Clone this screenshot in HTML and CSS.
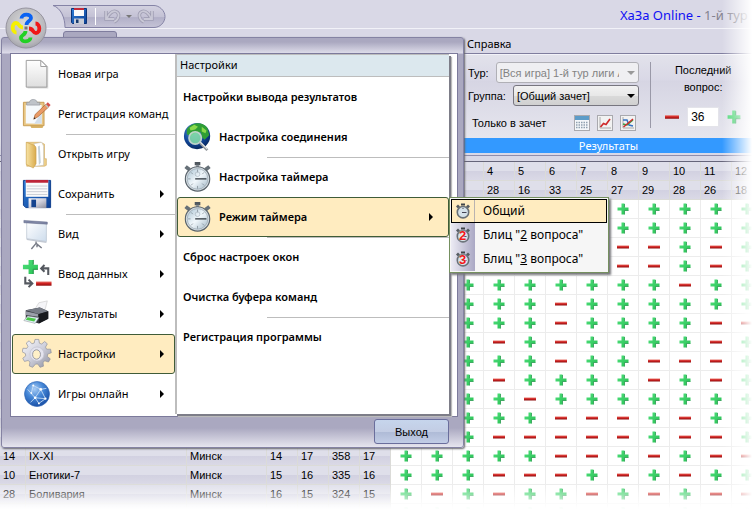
FILE: index.html
```html
<!DOCTYPE html>
<html lang="ru">
<head>
<meta charset="utf-8">
<title>ХаЗа Online</title>
<link rel="stylesheet" href="styles.css">
</head>
<body>
<svg class="defs" aria-hidden="true">
  <defs>
    <linearGradient id="gPlus" x1="0" y1="0" x2="1" y2="1"><stop offset="0" stop-color="#4fe07c"/><stop offset="1" stop-color="#27bf52"/></linearGradient>
    <linearGradient id="gMinus" x1="0" y1="0" x2="0" y2="1"><stop offset="0" stop-color="#e8786e"/><stop offset=".45" stop-color="#d02020"/><stop offset="1" stop-color="#8e1010"/></linearGradient>
    <linearGradient id="gPage" x1="0" y1="0" x2="0" y2="1"><stop offset="0" stop-color="#ffffff"/><stop offset="1" stop-color="#dedede"/></linearGradient>
    <linearGradient id="gFolder" x1="0" y1="0" x2="1" y2="0"><stop offset="0" stop-color="#f8e3a4"/><stop offset="1" stop-color="#d9ab4d"/></linearGradient>
    <linearGradient id="gDisk" x1="0" y1="0" x2="1" y2="1"><stop offset="0" stop-color="#2f7fd8"/><stop offset="1" stop-color="#0c3f94"/></linearGradient>
    <linearGradient id="gMetal" x1="0" y1="0" x2="1" y2="1"><stop offset="0" stop-color="#f8f8fc"/><stop offset=".5" stop-color="#cfd0dc"/><stop offset="1" stop-color="#8b8d9c"/></linearGradient>
    <linearGradient id="gScreen" x1="0" y1="0" x2="1" y2="1"><stop offset="0" stop-color="#ffffff"/><stop offset="1" stop-color="#cddcec"/></linearGradient>
    <radialGradient id="gBlue" cx=".4" cy=".3" r=".7"><stop offset="0" stop-color="#a8ccf4"/><stop offset=".5" stop-color="#4486d6"/><stop offset="1" stop-color="#1b52a8"/></radialGradient>
    <radialGradient id="gEarth" cx=".4" cy=".3" r=".75"><stop offset="0" stop-color="#5f9ce0"/><stop offset=".6" stop-color="#12489c"/><stop offset="1" stop-color="#062356"/></radialGradient>
    <linearGradient id="gDial" x1="0" y1="0" x2="1" y2="1"><stop offset="0" stop-color="#a9c2d2"/><stop offset=".5" stop-color="#f2f8fc"/><stop offset="1" stop-color="#a3b8c6"/></linearGradient>
    <radialGradient id="gOrb" cx=".5" cy=".4" r=".6"><stop offset="0" stop-color="#dcdcdc"/><stop offset=".8" stop-color="#b8b8bc"/><stop offset="1" stop-color="#a4a4ac"/></radialGradient>
    <linearGradient id="gQuick" x1="0" y1="0" x2="0" y2="1"><stop offset="0" stop-color="#d3d1e0"/><stop offset=".5" stop-color="#c4c2d5"/><stop offset=".55" stop-color="#b2b0c8"/><stop offset="1" stop-color="#c5c3d6"/></linearGradient>

    <symbol id="i-plus" viewBox="0 0 12 12"><path d="M4.500.5h3v4h4v3h-4v4h-3v-4h-4v-3h4z" fill="url(#gPlus)"/><path d="M7.500 1v3.500M11.500 7.500h-4v4" fill="none" stroke="#1a8f42" stroke-width=".7"/></symbol>
    <symbol id="i-minus" viewBox="0 0 12 12"><rect y="4.500" width="12" height="3" fill="url(#gMinus)"/></symbol>

    <symbol id="i-new" viewBox="0 0 32 32"><path d="M5 1.500h16l6 6v23H5z" fill="#999" opacity=".35" transform="translate(1 1)"/><path d="M4.500 1.500H20l6.500 6.500v22h-22z" fill="url(#gPage)" stroke="#9a9a9a"/><path d="M20 1.500V8h6.500z" fill="#fff" stroke="#9a9a9a"/></symbol>
    <symbol id="i-register" viewBox="0 0 32 32"><path d="M8 27h15l-1 4H10z" fill="#d9b468"/><path d="M1.500 3.500h22v25h-22z" fill="#e8c684" stroke="#c69b50"/><path d="M4 6.500h17v20l-17-.500z" fill="#f6f9fc"/><path d="M21 14v12l-8 .500z" fill="#d3deea"/><path d="M5 3.500h3c0-4 8-4 8 0h3v3H5z" fill="#bfc3c9" stroke="#8f949c" stroke-width=".7"/><path d="M12.500 21.500l1.500-5L25.500 5.500l3 3L17 19z" fill="#e99a66" stroke="#a7602f" stroke-width=".7"/><path d="M25.500 5.500l2-2 3 3-2 2z" fill="#d3504c"/><path d="M24.500 6.500l1-1 3 3-1 1z" fill="#bcc"/><path d="M12.500 21.500l.6-2 1.400 1.400z" fill="#222"/></symbol>
    <symbol id="i-open" viewBox="0 0 32 32"><path d="M5 3.500h15l4 2V21h2v7l-2 1H5z" fill="#edce87" stroke="#cfa658" stroke-width=".6"/><path d="M13 5l8-1.500 2 4V28l-9 1z" fill="#fff" stroke="#b7b7b7" stroke-width=".5"/><path d="M17 8l2-1 1 18-2 3z" fill="#c5d2da"/><path d="M4.500 3.500l8 3c2 1 2.500 2 2.500 4v16l-3 4.500-7.500-4z" fill="url(#gFolder)" stroke="#c89f4d" stroke-width=".6"/></symbol>
    <symbol id="i-save" viewBox="0 0 32 32"><path d="M1.500 1.500h29v29H4l-2.500-2.500z" fill="url(#gDisk)" stroke="#0b3c8c"/><path d="M4 1h24v18H4z" fill="#fafafa"/><path d="M4 1h24v3H4z" fill="#bd2438"/><path d="M5 7.500h22M5 10.500h22M5 13.500h22M5 16.500h22" stroke="#b9bfc9" stroke-width=".8"/><path d="M7 20.500h19V31H7z" fill="url(#gMetal)"/><path d="M10 22h5v8h-5z" fill="#15448f"/></symbol>
    <symbol id="i-save-s" viewBox="0 0 16 16"><path d="M.5.5h15v15h-14l-1-1z" fill="url(#gDisk)" stroke="#0b3478"/><path d="M3 0h10v8H3z" fill="#fafafa"/><path d="M3 0h10v2H3z" fill="#c22a3c"/><path d="M3 10.500h10V16H3z" fill="#c8ccd6"/><path d="M5 11.500h2.500V15H5z" fill="#15386e"/></symbol>
    <symbol id="i-view" viewBox="0 0 32 32"><path d="M5 3l21 2v19L5 21z" fill="url(#gScreen)" stroke="#b2bfcc" stroke-width=".7"/><path d="M2 1.500l25 1.800v2.200L2 4z" fill="#8087a6" stroke="#586080" stroke-width=".5"/><path d="M5 21l21 3v1.500L5 22.500z" fill="#c2c8d2"/><path d="M15 24v3M15 26l-5 6M15 26l6 5M16 26l0 4" stroke="#777b86" stroke-width="1.500" fill="none"/></symbol>
    <symbol id="i-data" viewBox="0 0 32 32"><path d="M7 1h5v5h5v5h-5v5H7v-5H1V6h6z" fill="url(#gPlus)"/><path d="M12 1v5M17 11h-5v5" stroke="#168a3c" fill="none"/><path d="M21 10h7v7M24 6.500L20.500 10l3.500 3.500M3.500 19v7h6M7 22l4 4-4 4" fill="none" stroke="#555960" stroke-width="2.200"/><rect x="15" y="24" width="16.500" height="4.500" fill="url(#gMinus)"/></symbol>
    <symbol id="i-print" viewBox="0 0 32 32"><path d="M13 12L18 4l9-2-3 12z" fill="#f5f5f8" stroke="#bbb" stroke-width=".5"/><path d="M4 12l15-3 9 4v8l-10 5-14-4z" fill="#34373e"/><path d="M4 12l15-3 9 4-10 3z" fill="#777c86"/><path d="M18 16l10-3v8l-10 5z" fill="#16181c"/><path d="M4 13l13 3v3L4 17z" fill="#9b9faa"/><path d="M6 18l12 2-4 6-12-3z" fill="#dff0f8" stroke="#8a8a8a" stroke-width=".5"/><path d="M6 19.500l9 1.500-2 3-9-2z" fill="#4cc648"/></symbol>
    <symbol id="i-gear" viewBox="0 0 32 32"><path d="M13.400 1h4.200l.7 4.200 2.500.9 3.300-2.800 3 2.600-2 3.700 1.300 2.300 4.300-.1.800 4-4 1.500-.4 2.600 3.300 2.700-2 3.500-4.100-1.300-2 1.700.5 4.200-3.800 1.300-2.400-3.600h-2.600L10.800 32l-3.700-1.600.7-4.200-2-1.800-4.100 1-1.900-3.500 3.300-2.600-.4-2.600-3.500-1.900.8-4 4.200.2 1.400-2.200-1.900-3.800 3.200-2.500L10 5.900l2.500-.9z" transform="translate(1 -.5) scale(.96)" fill="url(#gMetal)" stroke="#888a99" stroke-width=".7"/><circle cx="16" cy="16" r="7.500" fill="#e3e3ee" stroke="#c0c0ce" stroke-width=".7"/><ellipse cx="15.500" cy="16.500" rx="4.200" ry="5" fill="#fff0c8" stroke="#8b8d9b" stroke-width=".9"/></symbol>
    <symbol id="i-net" viewBox="0 0 32 32"><circle cx="16" cy="16" r="13.300" fill="url(#gBlue)" stroke="#2c64b4" stroke-width=".7"/><path d="M6 11l8 9 11 1M12 7l8 4 6-1M14 20l6-9M14 20l-5 5M20 11l5 10-7 5-4-6M12 7l-2 8" fill="none" stroke="#c9def6" stroke-width=".9"/><g fill="#fff"><circle cx="14" cy="20" r="1.400"/><circle cx="20" cy="11" r="1.400"/><circle cx="25" cy="21" r="1.200"/><circle cx="12" cy="7" r="1.100"/><circle cx="10" cy="15" r="1"/><circle cx="18" cy="26" r="1"/></g></symbol>
    <symbol id="i-earth" viewBox="0 0 32 32"><circle cx="15" cy="15" r="14" fill="url(#gEarth)"/><path d="M4 8C9 0 20-1 26 6l2 8-5 5-3-3-1-5-6 1-5 3-4-2z" fill="#2f9e35"/><path d="M7 6l5-3 4 2-3 3-5 1zM20 5l5 4-1 3-4-2z" fill="#8bd94c"/><circle cx="13" cy="17" r="6.600" fill="#85dfa6" fill-opacity=".85" stroke="#bfd2cb" stroke-width="1.800"/><path d="M18 22l8 8" stroke="#8f9498" stroke-width="3"/><path d="M18.500 21.500l7.500 7.500" stroke="#e6eaec" stroke-width="1.200"/></symbol>
    <symbol id="i-watch" viewBox="0 0 32 32"><path d="M12.500 0h6v3.500h-6z" fill="#4f575e"/><path d="M14 3h3v4h-3z" fill="#888f96"/><path d="M1.500 6.500l2.500-3 4 3-2.500 3zM29.500 6.500l-2.500-3-4 3 2.500 3z" fill="#667078"/><circle cx="15.500" cy="18" r="13" fill="#d3dbe1" stroke="#59636b" stroke-width="1.200"/><circle cx="15.500" cy="18" r="11" fill="url(#gDial)" stroke="#96a4ae" stroke-width=".7"/><path d="M15.500 8v3M15.500 25.500v3M5.500 18h2.500M8.500 11l2 2M22.500 11l-2 2M8.500 25l2-2M22.500 25l-2-2" stroke="#7d8993" stroke-width=".8"/><circle cx="15.500" cy="13" r="2.500" fill="none" stroke="#a7b3bd" stroke-width=".7"/><path d="M13 18h12" stroke="#333b43" stroke-width="1.400"/></symbol>
    <symbol id="i-watch-s" viewBox="0 0 16 16"><path d="M6 .5h4v2H6z" fill="#3f4449"/><path d="M1 3.500L3 1.500l2 2-2 2zM15 3.500l-2-2-2 2 2 2z" fill="#555b60"/><circle cx="8" cy="9.200" r="5.700" fill="#d5e2ea" stroke="#687077" stroke-width="1.600"/><path d="M7 9.500h4.500M8 5v1" stroke="#445" stroke-width="1"/></symbol>
    <symbol id="i-undo" viewBox="0 0 18 16"><path d="M2 3v8h8M3 10.500C5 5 9 2.500 12 3.500c4 1.500 3.500 7.500-2 10.500" fill="none" stroke="#9f9db2" stroke-width="3.400"/><path d="M2 3v8h8M3 10.500C5 5 9 2.500 12 3.500c4 1.500 3.500 7.500-2 10.500" fill="none" stroke="#c9c8d6" stroke-width="1.800"/></symbol>
  </defs>
</svg>

<div class="app">
  <header class="titlebar">
    <div class="quick">
      <svg class="quick-shape" viewBox="0 0 115 24" aria-hidden="true"><path d="M1 .5h101c5 0 11 5 11 11s-5 11-11 11H13C13 13 9 3 1 .5z" fill="url(#gQuick)" stroke="#8583a6"/></svg>
      <button type="button" class="tool" aria-label="Сохранить"><svg width="16" height="16"><use href="#i-save-s"/></svg></button>
      <span class="quick-sep"></span>
      <button type="button" class="tool" aria-label="Отменить"><svg width="18" height="16"><use href="#i-undo"/></svg></button>
      <span class="caret"></span>
      <button type="button" class="tool flip" aria-label="Повторить"><svg width="18" height="16"><use href="#i-undo"/></svg></button>
    </div>
    <h1 class="title">ХаЗа Online - <span>1-й тур л</span></h1>
  </header>

  <nav class="tabs">
    <span class="tab-stub"></span>
    <a href="#" class="tab">Справка</a>
  </nav>

  <section class="ribbon">
    <div class="groups">
      <div class="fields">
        <div class="field"><label for="tour">Тур:</label><span class="pick off"><select id="tour" disabled><option>[Вся игра] 1-й тур лиги А</option></select></span></div>
        <div class="field"><label for="group">Группа:</label><span class="pick"><select id="group"><option>[Общий зачет]</option></select></span></div>
        <div class="field tools"><span>Только в зачет</span>
          <button type="button" aria-label="Калькулятор"><svg width="14" height="14" viewBox="0 0 14 14"><path d="M0 0h14v14H0z" fill="#f4f7fa"/><path d="M0 0h14v4H0z" fill="#5d9cc8"/><path d="M1 6.500h12M1 9h12M1 11.500h12" stroke="#8fa0b0" stroke-width="1.500" stroke-dasharray="1.500 1"/></svg></button>
          <button type="button" aria-label="График"><svg width="14" height="14" viewBox="0 0 14 14"><path d="M2 1v11h11" stroke="#aaa" fill="none"/><path d="M2.500 11l3-3.500 2.500 1L12 3" stroke="#cf2a2a" stroke-width="1.700" fill="none"/></svg></button>
          <button type="button" aria-label="Сравнение"><svg width="14" height="14" viewBox="0 0 14 14"><path d="M2 1v11h11" stroke="#aaa" fill="none"/><path d="M2 4h4l2 5 4 1" stroke="#3673c4" stroke-width="1.500" fill="none"/><path d="M2 8l4 1 6-5" stroke="#36a04a" stroke-width="1.500" fill="none"/><path d="M2.500 11L12 3" stroke="#cf2a2a" stroke-width="1.500"/></svg></button>
        </div>
      </div>
      <div class="last">
        <label for="last">Последний вопрос:</label>
        <div class="stepper">
          <button type="button" aria-label="Меньше"><svg width="14" height="14"><use href="#i-minus"/></svg></button>
          <input id="last" type="text" value="36">
          <button type="button" aria-label="Больше"><svg width="14" height="14"><use href="#i-plus"/></svg></button>
        </div>
      </div>
    </div>
    <div class="caption">Результаты</div>
  </section>

  <div class="sheet">
    <table>
      <colgroup><col class="c-num"><col class="c-team"><col class="c-city"><col span="16" class="c-cell"></colgroup>
      <thead id="head"></thead>
      <tbody id="rows"></tbody>
    </table>
  </div>

  <div class="menu">
    <div class="menu-body">
      <ul class="primary">
        <li><button type="button"><svg><use href="#i-new"/></svg>Новая игра</button></li>
        <li class="ruled"><button type="button"><svg><use href="#i-register"/></svg>Регистрация команд</button></li>
        <li><button type="button"><svg><use href="#i-open"/></svg>Открыть игру</button></li>
        <li class="ruled"><button type="button" class="more"><svg><use href="#i-save"/></svg>Сохранить</button></li>
        <li><button type="button" class="more"><svg><use href="#i-view"/></svg>Вид</button></li>
        <li><button type="button" class="more"><svg><use href="#i-data"/></svg>Ввод данных</button></li>
        <li><button type="button" class="more"><svg><use href="#i-print"/></svg>Результаты</button></li>
        <li><button type="button" class="more active"><svg><use href="#i-gear"/></svg>Настройки</button></li>
        <li><button type="button" class="more"><svg><use href="#i-net"/></svg>Игры онлайн</button></li>
      </ul>
      <div class="secondary">
        <h2>Настройки</h2>
        <ul>
          <li><button type="button">Настройки вывода результатов</button></li>
          <li class="ruled"><button type="button"><svg><use href="#i-earth"/></svg>Настройка соединения</button></li>
          <li><button type="button"><svg><use href="#i-watch"/></svg>Настройка таймера</button></li>
          <li class="ruled"><button type="button" class="more active"><svg><use href="#i-watch"/></svg>Режим таймера</button></li>
          <li><button type="button">Сброс настроек окон</button></li>
          <li class="ruled"><button type="button">Очистка буфера команд</button></li>
          <li><button type="button">Регистрация программы</button></li>
        </ul>
      </div>
    </div>
    <div class="menu-foot"><button type="button" class="exit">Выход</button></div>
  </div>

  <button type="button" class="orb" aria-label="Меню">
    <svg viewBox="0 0 42 42" aria-hidden="true">
      <circle cx="21" cy="21" r="20" fill="url(#gOrb)" stroke="#96949f"/>
      <g fill="none" stroke-width="3.800">
        <path d="M16.500 11.500c0-5 9.500-5 9.500-.5 0 3.500-4.500 2.500-4.500 7" stroke="#0b63f2"/>
        <path d="M30.500 16.500c5 0 5 9.500.5 9.500-3.500 0-2.500-4.500-7-4.500" stroke="#f01818"/>
        <path d="M25.500 30.500c0 5-9.500 5-9.500.5 0-3.500 4.500-2.500 4.500-7" stroke="#22d024"/>
        <path d="M11.500 25.500c-5 0-5-9.500-.5-9.500 3.500 0 2.500 4.500 7 4.500" stroke="#f6f000"/>
      </g>
      <path d="M19.500 19.500h3v3h-3z" fill="#777"/>
    </svg>
  </button>

  <ul class="popup">
    <li><button type="button" class="picked"><span class="ico"><svg><use href="#i-watch-s"/></svg></span>Общий</button></li>
    <li><button type="button"><span class="ico"><svg><use href="#i-watch-s"/></svg><b>2</b></span><span>Блиц "<u>2</u> вопроса"</span></button></li>
    <li><button type="button"><span class="ico"><svg><use href="#i-watch-s"/></svg><b>3</b></span><span>Блиц "<u>3</u> вопроса"</span></button></li>
  </ul>

  <div class="fade"></div>
</div>
<script src="table.js"></script>
</body>
</html>
```

FILE: table.js
```js
// Each result row: number, team, city, four totals, answers to questions 1-12.
const head = [
  ['', '', '', '', '', '', '', 1, 2, 3, 4, 5, 6, 7, 8, 9, 10, 11, 12],
  ['', '', '', '', '', '', '', '', '', '', 28, 16, 33, 25, 27, 29, 28, 26, 18]
];
const rows = [
  [[], '++++++++++++'],
  [[], '++++++++++++'],
  [[], '+++++++--+-+'],
  [[], '+++++++--+-+'],
  [[], '+++++++++-++'],
  [[], '+++++-++++++'],
  [[], '+++++-++++--'],
  [[], '+++-+-++++-+'],
  [[], '+++++-++---+'],
  [[], '+++-++++-+-+'],
  [[], '++++-+++++++'],
  [[], '+++++---+-++'],
  [[], '+++-----+--+'],
  [[14, 'IX-XI', 'Минск', 14, 17, 358, 17], '+++++--+-+--'],
  [[10, 'Енотики-7', 'Минск', 15, 16, 335, 16], '+++---+-+-++'],
  [[28, 'Боливария', 'Минск', 16, 15, 324, 15], '+-+-++-+-+--'],
  [[11, 'Гейм', 'Минск', 17, 15, 343, 15], '+++-++-+-+-+']
];

const icon = (mark) =>
  `<svg width="12" height="12"><use href="#i-${mark === '+' ? 'plus' : 'minus'}"/></svg>`;

document.getElementById('head').innerHTML = head
  .map((cells) => `<tr>${cells.map((c) => `<th>${c}</th>`).join('')}</tr>`)
  .join('');

document.getElementById('rows').innerHTML = rows
  .map(([info, marks]) => {
    const left = Array.from({ length: 7 }, (_, i) => `<th>${info[i] ?? ''}</th>`).join('');
    const right = [...marks].map((m) => `<td>${icon(m)}</td>`).join('');
    return `<tr>${left}${right}</tr>`;
  })
  .join('');
```

FILE: styles.css
```css
* { box-sizing: border-box; }

body {
  margin: 0;
  background: #fff;
  color: #000;
  font: 11px/16px "Noto Sans", sans-serif;
}

button, input, select { font: inherit; color: inherit; }
button { padding: 0; border: 0; background: none; }
ul { margin: 0; padding: 0; list-style: none; }
.defs { position: absolute; width: 0; height: 0; }

.app {
  position: relative;
  height: 100vh;
  overflow: hidden;
  background: #d9d8e6;
}

/* Title bar */
.titlebar {
  display: flex;
  justify-content: space-between;
  height: 29px;
  padding: 5px 0 0 52px;
  border-bottom: 1px solid #f2f2f8;
}
.quick {
  position: relative;
  display: flex;
  align-items: center;
  gap: 8px;
  width: 115px;
  height: 22px;
  padding-left: 19px;
}
.quick-shape { position: absolute; left: 0; top: 0; width: 115px; height: 24px; }
.tool { position: relative; display: flex; }
.flip { transform: scaleX(-1); }
.quick-sep { position: relative; width: 1px; height: 17px; background: #fff; }
.caret {
  position: relative;
  margin: 0 -4px;
  border: 3px solid transparent;
  border-top-color: #777;
  border-bottom: 0;
}
.title {
  width: 135px;
  margin: 0;
  font-size: 13px;
  font-weight: 400;
  line-height: 20px;
  color: #1010f4;
  white-space: nowrap;
}
.title span { color: #84828f; }

/* Tabs */
.tabs {
  display: flex;
  height: 25px;
  padding-left: 63px;
  border-bottom: 1px solid #7f7d9e;
}
.tab-stub {
  width: 54px;
  height: 8px;
  margin: 2px 350px 0 0;
  border: 1px solid #7f7d9e;
  border-radius: 3px 3px 0 0;
  background: #aaa8c0;
}
.tab { line-height: 30px; color: #000; text-decoration: none; }

/* Ribbon */
.ribbon {
  padding-left: 464px;
  border-top: 1px solid #f2f2f8;
  border-bottom: 1px solid #8f8dac;
  font-family: "Liberation Sans", sans-serif;
  background: linear-gradient(#e2e2eb, #d9d8e6 25px, #d6d5e3 26px, #e6e6ee 84px, #d9d8e6);
}
.groups { display: flex; height: 83px; padding-top: 7px; }
.fields {
  display: flex;
  flex-direction: column;
  gap: 2px;
  width: 188px;
  height: 66px;
  padding: 0 11px 0 4px;
  border-right: 1px solid #9a99a8;
}
.field { display: flex; align-items: center; gap: 7px; flex: none; height: 21px; white-space: nowrap; }
.field label { flex: none; }
.pick { position: relative; flex: 1; min-width: 0; }
.pick::after {
  content: "";
  position: absolute;
  right: 4px;
  top: 9px;
  border: 4px solid transparent;
  border-top-color: #000;
  border-bottom: 0;
}
.pick.off::after { border-top-color: #999; }
.pick select {
  display: block;
  width: 100%;
  height: 21px;
  padding: 0 19px 0 3px;
  border: 1px solid #77767f;
  border-radius: 3px;
  appearance: none;
  background: linear-gradient(#f2f2f2, #e8e8e8 50%, #dadada 51%, #d0d0d0);
  opacity: 1;
}
.pick.off select { border-color: #b0b0b6; background: #efeff2; color: #838383; }
.tools { gap: 7px; margin-top: 4px; }
.tools span { margin: 0 auto 0 4px; }
.tools button {
  display: flex;
  padding: 0;
  border: 1px solid #a9a9ae;
  background: #f2f2f2;
}
.tools button:last-child { margin-right: 3px; }
.last { width: 104px; text-align: center; line-height: 17px; }
.last label { display: block; width: 68px; margin: 0 auto; }
.stepper {
  display: flex;
  align-items: center;
  justify-content: center;
  gap: 8px;
  height: 22px;
  margin-top: 10px;
}
.stepper button { display: flex; }
.stepper input { width: 32px; height: 20px; padding: 0 3px; border: 1px solid #e4e4ea; background: #fff; font-size: 12px; }
.caption {
  height: 15px;
  margin-bottom: 2px;
  padding-right: 2px;
  background: #3399ff;
  color: #fff;
  font: 11px/15px "Noto Sans", sans-serif;
  text-align: center;
}

/* Results table */
.sheet { margin-top: 5px; border-top: 1px solid #66657a; }
table {
  table-layout: fixed;
  width: 763px;
  border-collapse: separate;
  border-spacing: 0;
  font: 11px/18px "Liberation Sans", sans-serif;
}
.c-num { width: 26px; }
.c-team { width: 161px; }
.c-city { width: 80px; }
.c-cell { width: 31px; }
th, td { height: 19px; padding: 0; }
th {
  padding-left: 3px;
  border-right: 1px solid #dbdbd8;
  border-bottom: 1px solid #dbdbd8;
  background: linear-gradient(#dfdfea 50%, #d2d1e1 51%, #dad9e6);
  font-weight: 400;
  text-align: left;
}
td {
  border-right: 1px solid #ececec;
  border-bottom: 1px solid #ececec;
  background: #fff;
  text-align: center;
}
td svg { display: block; margin: 0 auto; }

/* Application menu */
.menu {
  position: absolute;
  left: 1px;
  top: 37px;
  width: 463px;
  padding: 15px 5px 0 8px;
  border: 1px solid #8583a3;
  border-radius: 3px;
  background: linear-gradient(#aaa8c0 4px, #dddce9 15px, #aaa8c0 16px, #aaa8c0 390px, #e6e5ef);
  box-shadow: 1px 1px 2px #66666c;
}
.menu-body {
  display: grid;
  grid-template-columns: 163px 1fr;
  height: 364px;
  padding: 0 8px 6px 1px;
  border: 1px solid #7c7a9b;
  background: #fff;
}
.menu button { display: flex; align-items: center; text-align: left; white-space: nowrap; }
.menu li { position: relative; height: 40px; }
.menu li button { position: relative; width: 100%; height: 40px; border: 1px solid transparent; }
.menu li svg { flex: none; width: 30px; height: 32px; }
.ruled::after {
  content: "";
  position: absolute;
  left: 54px;
  right: 0;
  bottom: -1px;
  height: 1px;
  background: #bdbdbd;
}
.primary button { padding-left: 9px; gap: 6px; }
.menu .active { border: 1px solid #405c38; border-radius: 3px; background: #ffecc0; }
.more::after {
  content: "";
  margin: 0 10px 0 auto;
  border: 4px solid transparent;
  border-left-color: #000;
  border-right: 0;
}
.secondary {
  border-left: 2px solid #bdbdbd;
  box-shadow: 2px 2px 0 #7d7d88, 3px 3px 1px #bbb;
  background: #fff;
}
.secondary h2 {
  height: 23px;
  margin: 0;
  padding-left: 3px;
  border-top: 1px solid #bdbdbd;
  border-bottom: 1px solid #bdbdbd;
  background: #dce8ee;
  font-size: 11px;
  font-weight: 400;
  line-height: 20px;
}
.secondary button { padding-left: 5px; gap: 6px; font-weight: 600; }
.secondary .ruled::after { left: 90px; }
.secondary .more::after { margin-right: 15px; }
.menu-foot { display: flex; justify-content: flex-end; padding: 2px 9px 3px 0; }
.menu .exit {
  justify-content: center;
  width: 75px;
  height: 25px;
  border: 1px solid #6a6e9c;
  border-radius: 3px;
  background: linear-gradient(#c6d5ec, #c3cde4 50%, #aebad6 51%, #c2cde6);
  font-family: "Liberation Sans", sans-serif;
}

/* Round menu button */
.orb { position: absolute; left: 5px; top: 7px; width: 42px; height: 42px; }
.orb svg { display: block; width: 42px; height: 42px; }

/* Timer mode popup */
.popup {
  position: absolute;
  left: 449px;
  top: 197px;
  width: 160px;
  padding: 1px;
  border: 1px solid #75905f;
  background: #f6f6f6;
  box-shadow: 2px 2px 2px #77777c;
  font-size: 12px;
}
.popup button {
  display: flex;
  align-items: center;
  gap: 8px;
  width: 100%;
  height: 24px;
  text-align: left;
}
.popup .picked { border: 1px solid #000; background: #ffecc0; }
.ico {
  position: relative;
  display: flex;
  align-items: center;
  justify-content: center;
  width: 24px;
  height: 24px;
  background: linear-gradient(90deg, #ecebf4, #aaa8c4);
}
.picked .ico { width: 23px; height: 22px; border-right: 1px solid #b9b3b0; background: none; }
.ico svg { width: 16px; height: 16px; }
.ico b {
  position: absolute;
  left: 8px;
  top: 5px;
  color: #f21818;
  font: bold 13px/16px "Liberation Sans", sans-serif;
  text-shadow: 0 0 2px #fff;
}

/* Soft edges on the right and bottom */
.fade {
  position: absolute;
  inset: 0;
  pointer-events: none;
  background:
    linear-gradient(90deg, transparent calc(100% - 33px), #fff calc(100% - 3px)),
    linear-gradient(transparent calc(100% - 29px), #fff calc(100% - 3px));
}
```
